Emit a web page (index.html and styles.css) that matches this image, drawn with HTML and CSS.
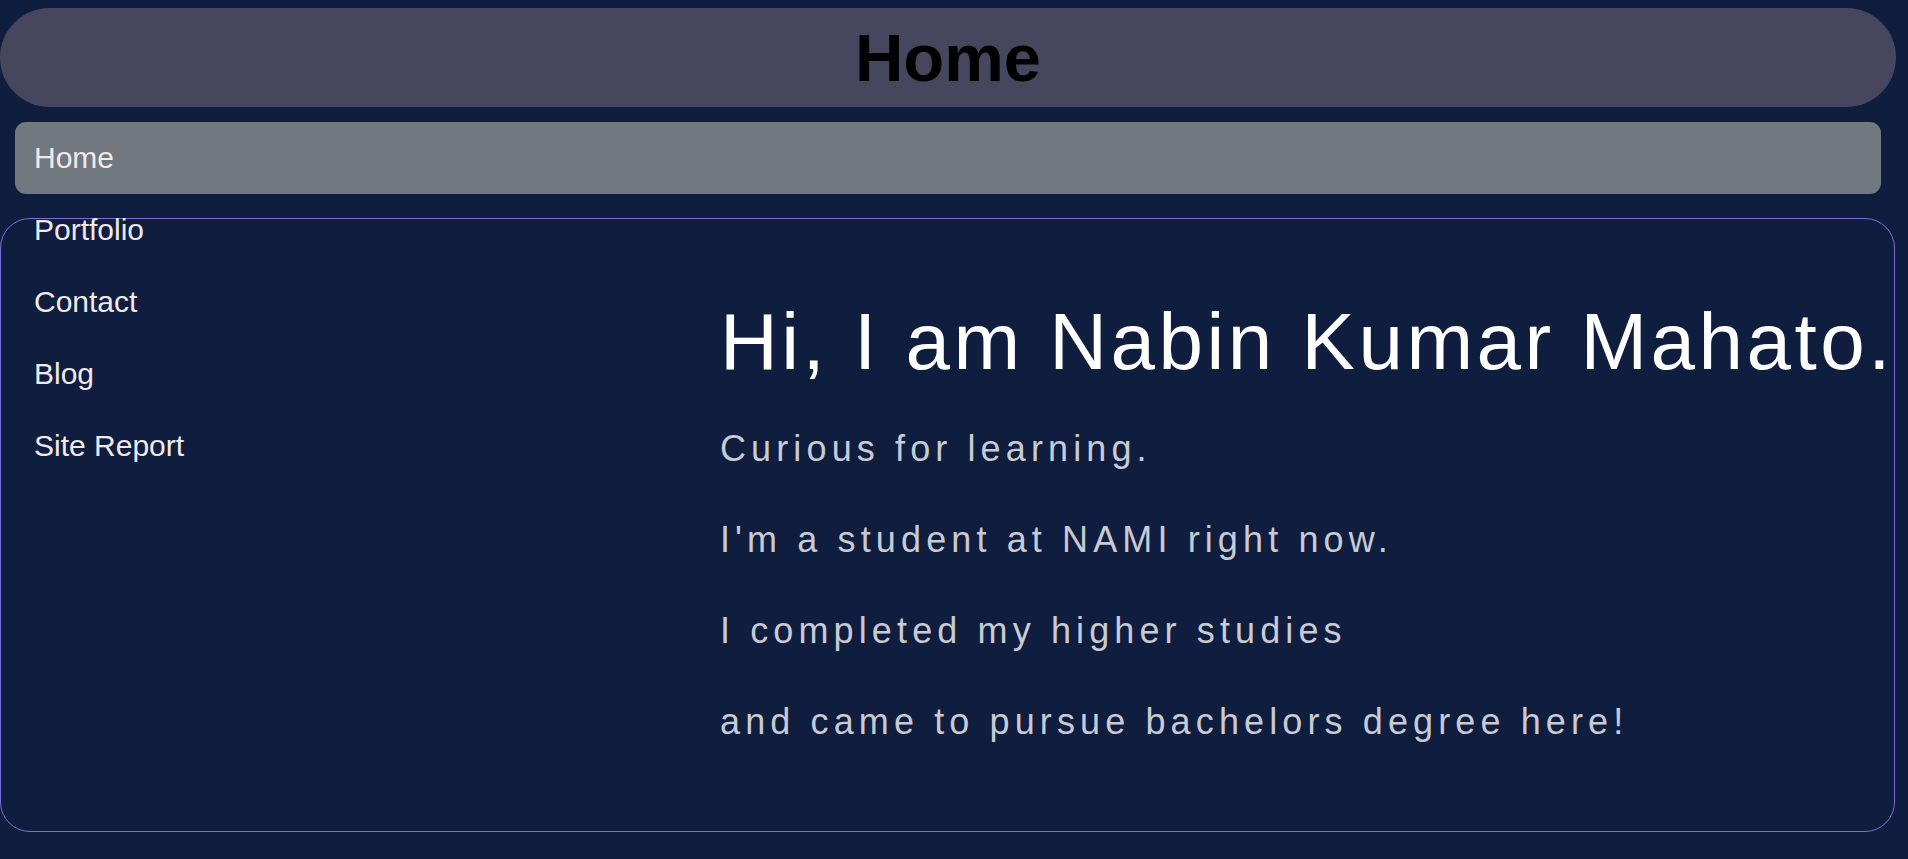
FILE: index.html
```html
<!DOCTYPE html>
<html lang="en">
<head>
<meta charset="utf-8">
<title>Home</title>
<link rel="stylesheet" href="styles.css">
</head>
<body>
<header class="site-header">
  <h1 class="site-title">Home</h1>
</header>
<div class="layout">
  <nav class="side-nav">
    <ul class="nav-list">
      <li><a class="nav-link active" href="#">Home</a></li>
      <li><a class="nav-link" href="#">Portfolio</a></li>
      <li><a class="nav-link" href="#">Contact</a></li>
      <li><a class="nav-link" href="#">Blog</a></li>
      <li><a class="nav-link" href="#">Site Report</a></li>
    </ul>
  </nav>
  <main class="panel">
    <section class="intro">
      <h2 class="intro-title">Hi, I am Nabin Kumar Mahato.</h2>
      <p class="intro-text">Curious for learning.</p>
      <p class="intro-text">I'm a student at NAMI right now.</p>
      <p class="intro-text">I completed my higher studies</p>
      <p class="intro-text">and came to pursue bachelors degree here!</p>
    </section>
  </main>
</div>
</body>
</html>
```
FILE: styles.css
```css
* { box-sizing: border-box; }

html, body {
  background: #0f1d3f;
}

body {
  margin: 0;
  padding: 8px 12px 0 0;
  font-family: "Liberation Sans", Arial, sans-serif;
}

.site-header {
  height: 99px;
  border-radius: 50px;
  background: #46465f;
  display: flex;
  align-items: center;
  justify-content: center;
}

.site-title {
  margin: 0;
  font-size: 67px;
  font-weight: bold;
  line-height: 1;
  color: #000;
}

.layout {
  display: grid;
  grid-template-columns: 1fr;
  margin-top: 15px;
}

.side-nav,
.panel {
  grid-row: 1;
  grid-column: 1;
}

.side-nav {
  align-self: start;
  margin: 0 15px;
  position: relative;
  z-index: 1;
}

.nav-list {
  list-style: none;
  margin: 0;
  padding: 0;
}

.nav-link {
  display: block;
  height: 72px;
  line-height: 72px;
  padding-left: 19px;
  font-size: 30px;
  color: #f1e9ea;
  text-decoration: none;
  border-radius: 11px;
}

.nav-link.active {
  background: #71787f;
}

.panel {
  margin-top: 96px;
  margin-right: 1px;
  border: 1px solid #7b6fd8;
  border-radius: 30px;
  padding: 77px 0 89px 0;
}

.intro {
  margin-left: 719px;
  display: flex;
  flex-direction: column;
}

.intro-title {
  margin: 0 0 40px 0;
  font-size: 80px;
  font-weight: normal;
  line-height: 92px;
  letter-spacing: 3.5px;
  white-space: nowrap;
  color: #ffffff;
}

.intro-text {
  margin: 0 0 50px 0;
  font-size: 36px;
  line-height: 41px;
  letter-spacing: 5.12px;
  color: #c9cad3;
  white-space: nowrap;
}

.intro-text:last-child {
  margin-bottom: 0;
}
```
